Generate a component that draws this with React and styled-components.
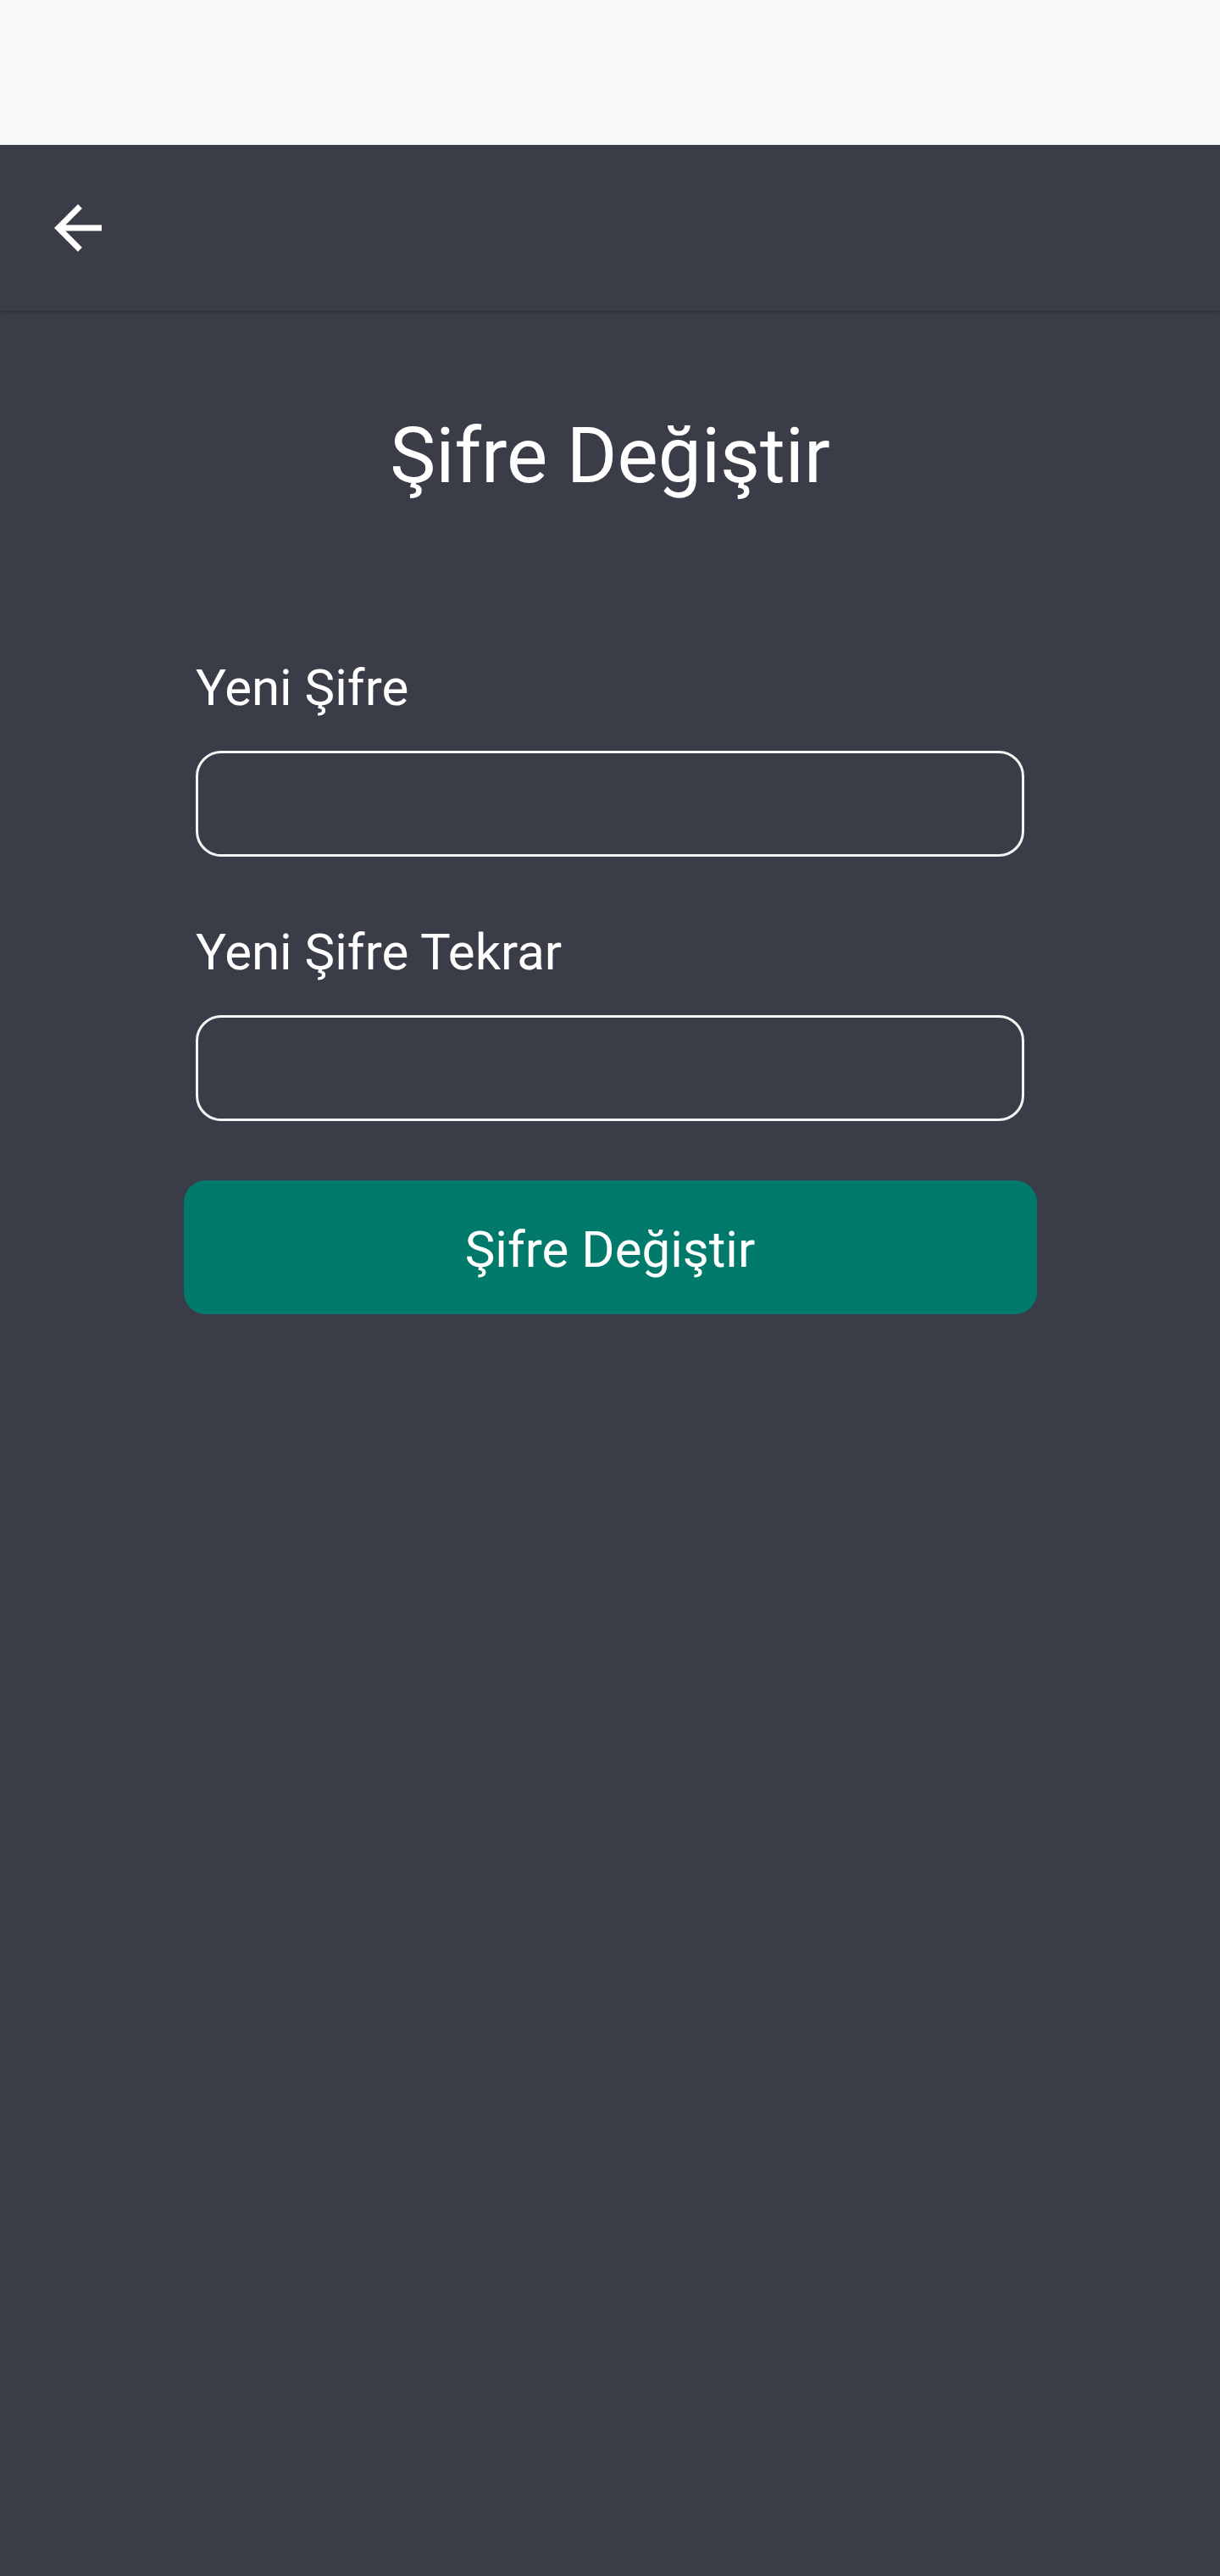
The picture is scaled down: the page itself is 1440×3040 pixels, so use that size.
import React from 'react';
import styled, { createGlobalStyle } from 'styled-components';

const GlobalStyle = createGlobalStyle`
  html, body {
    margin: 0;
    padding: 0;
    background: #3a3d47;
  }
  body {
    font-family: Roboto, "Noto Sans", "Liberation Sans", sans-serif;
  }
  * {
    box-sizing: border-box;
  }
`;

const Screen = styled.div`
  min-height: 3040px;
  display: flex;
  flex-direction: column;
  background: #3a3d47;
`;

const StatusBar = styled.div`
  height: 171px;
  background: #f8f8f8;
  flex-shrink: 0;
`;

const Header = styled.header`
  height: 196px;
  display: flex;
  align-items: center;
  padding-left: 50px;
  background: #3a3d47;
  box-shadow: 0 2px 3px rgba(0, 0, 0, 0.18);
  position: relative;
  z-index: 1;
`;

const BackButton = styled.button`
  width: 84px;
  height: 84px;
  padding: 0;
  border: none;
  background: transparent;
  display: flex;
  align-items: center;
  justify-content: center;
  cursor: pointer;
`;

const Main = styled.main`
  flex: 1;
  display: flex;
  flex-direction: column;
  align-items: center;
  padding-top: 118px;
`;

const Title = styled.h1`
  margin: 0;
  font-size: 91px;
  line-height: 107px;
  font-weight: 400;
  color: #ffffff;
  text-align: center;
`;

const Form = styled.form`
  width: 978px;
  margin-top: 185px;
  display: flex;
  flex-direction: column;
  align-items: stretch;
`;

const Field = styled.div`
  display: flex;
  flex-direction: column;
  gap: 39px;
  margin-bottom: ${p => p.$last ? '70px' : '78px'};
`;

const Label = styled.label`
  font-size: 60px;
  line-height: 70px;
  color: #ffffff;
`;

const Input = styled.input`
  height: 125px;
  width: 100%;
  border: 3px solid #f4f4f4;
  border-radius: 30px;
  background: transparent;
  color: #ffffff;
  font-family: inherit;
  font-size: 56px;
  padding: 0 32px;
  outline: none;
`;

const SubmitButton = styled.button`
  align-self: center;
  width: 1007px;
  height: 158px;
  border: none;
  border-radius: 26px;
  padding: 6px 0 0;
  background: #017a6c;
  color: #ffffff;
  font-family: inherit;
  font-size: 60px;
  line-height: 70px;
  cursor: pointer;
`;

const ArrowBack = () => (
  <svg width="84" height="84" viewBox="0 0 24 24" fill="#ffffff">
    <path d="M20 11H7.83l5.59-5.59L12 4l-8 8 8 8 1.41-1.41L7.83 13H20v-2z" />
  </svg>
);

export default function App() {
  return (
    <>
      <GlobalStyle />
      <Screen>
        <StatusBar />
        <Header>
          <BackButton aria-label="Geri">
            <ArrowBack />
          </BackButton>
        </Header>
        <Main>
          <Title>Şifre Değiştir</Title>
          <Form onSubmit={e => e.preventDefault()}>
            <Field>
              <Label htmlFor="pw1">Yeni Şifre</Label>
              <Input id="pw1" type="password" />
            </Field>
            <Field $last>
              <Label htmlFor="pw2">Yeni Şifre Tekrar</Label>
              <Input id="pw2" type="password" />
            </Field>
            <SubmitButton type="submit">Şifre Değiştir</SubmitButton>
          </Form>
        </Main>
      </Screen>
    </>
  );
}
